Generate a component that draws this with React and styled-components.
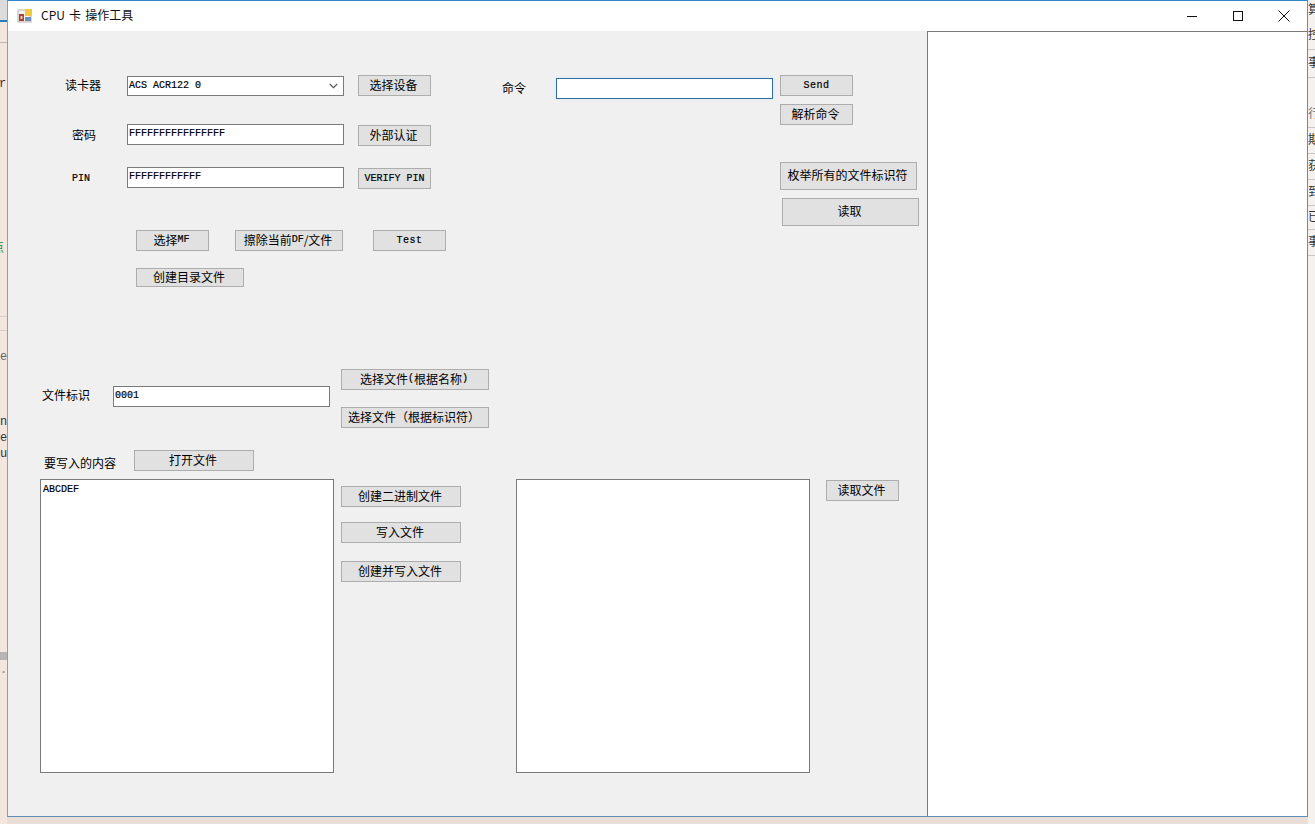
import React from 'react'
import styled, { createGlobalStyle } from 'styled-components'

const GlobalStyle = createGlobalStyle`
  * { box-sizing: border-box; }
  html, body { margin: 0; padding: 0; background: #e9dfd8; overflow: hidden; }
`

const uiFont = `"Noto Sans CJK SC", "Liberation Sans", sans-serif`
const monoFont = `"Liberation Mono", "Noto Sans CJK SC", monospace`

const Desktop = styled.div`
  width: 1315px;
  height: 824px;
  display: flex;
  align-items: flex-start;
  overflow: hidden;
  background: #e9dfd8;
`
const Strip = styled.div`
  width: ${(p) => p.$width}px;
  height: 824px;
  flex: none;
  overflow: hidden;
  background: ${(p) => p.$bg};
`
const StripRow = styled.div`
  height: ${(p) => p.$h}px;
  line-height: ${(p) => p.$h}px;
  font-family: ${monoFont};
  font-size: 12px;
  color: ${(p) => p.$color || '#333'};
  white-space: nowrap;
  background: ${(p) => p.$bg || 'transparent'};
  border-bottom: ${(p) => (p.$line ? `1px solid ${p.$line}` : 'none')};
`
const LeftLetter = styled.span`
  display: block;
  margin-left: ${(p) => p.$shift}px;
`

const Window = styled.div`
  width: 1301px;
  height: 817px;
  flex: none;
  display: flex;
  flex-direction: column;
  background: #fff;
  border: 1px solid #5f8fb8;
  border-left-color: #6fa5d8;
  border-top-color: #2f86c8;
`
const TitleBar = styled.div`
  height: 30px;
  flex: none;
  display: flex;
  align-items: center;
  padding-left: 9px;
  background: #fff;
`
const Title = styled.div`
  margin-left: 8px;
  padding-bottom: 3px;
  font-family: ${uiFont};
  font-size: 12px;
  word-spacing: 1.5px;
  color: #111;
  flex: 1;
`
const WinButton = styled.div`
  width: 46px;
  height: 30px;
  display: flex;
  align-items: center;
  justify-content: center;
`
const Content = styled.div`
  flex: 1;
  display: flex;
  min-height: 0;
`
const Form = styled.div`
  width: 919px;
  flex: none;
  padding-top: 44px;
  background: #f0f0f0;
  font-family: ${uiFont};
  font-size: 12px;
  color: #000;
`
const LogPanel = styled.div`
  width: 380px;
  flex: none;
  background: #fff;
  border-top: 1px solid #7a7a7a;
  border-left: 1px solid #7a7a7a;
`
const TopSection = styled.div`
  display: flex;
  align-items: flex-start;
`
const CredentialsColumn = styled.div`
  width: 438px;
  flex: none;
`
const FieldRow = styled.div`
  display: grid;
  grid-template-columns: 105px 217px 73px;
  column-gap: 14px;
  align-items: start;
  margin-top: ${(p) => p.$top || 0}px;
`
const FieldLabel = styled.div`
  padding-left: ${(p) => p.$indent}px;
  padding-top: ${(p) => p.$down}px;
  line-height: 18px;
`
const ActionRow = styled.div`
  display: flex;
  padding-left: 128px;
  margin-top: ${(p) => p.$top}px;
`
const CommandColumn = styled.div`
  margin-left: 56px;
  margin-top: 3px;
  display: flex;
  align-items: center;
`
const CommandLabel = styled.div`
  width: 54px;
  padding-bottom: 2px;
`
const SideColumn = styled.div`
  margin-left: 7px;
  display: flex;
  flex-direction: column;
  align-items: flex-start;
`
const FileSection = styled.div`
  display: flex;
  align-items: flex-start;
  margin-top: 82px;
  padding-left: 34px;
`
const FileLabel = styled.div`
  width: 71px;
  margin-top: 17px;
  line-height: 18px;
`
const FileInputWrap = styled.div`
  margin-top: 17px;
`
const ButtonStack = styled.div`
  display: flex;
  flex-direction: column;
  margin-left: ${(p) => p.$left}px;
  margin-top: ${(p) => p.$top || 0}px;
`
const WriteHeader = styled.div`
  display: flex;
  align-items: flex-start;
  margin-top: 22px;
  padding-left: 36px;
`
const WriteLabel = styled.div`
  width: 90px;
  margin-top: 4px;
  line-height: 17px;
`
const EditorRow = styled.div`
  display: flex;
  align-items: flex-start;
  margin-top: 8px;
  padding-left: 32px;
`
const Button = styled.div`
  width: ${(p) => p.$w}px;
  height: ${(p) => p.$h || 21}px;
  flex: none;
  margin-top: ${(p) => p.$top || 0}px;
  margin-left: ${(p) => p.$left || 0}px;
  padding-bottom: ${(p) => (p.$latin ? 0 : 2)}px;
  padding-right: ${(p) => (p.$latin ? 0 : 2)}px;
  display: flex;
  align-items: center;
  justify-content: center;
  white-space: nowrap;
  background: #e1e1e1;
  border: 1px solid #adadad;
  font-size: 12px;
  line-height: 1;
`
const Latin = styled.span`
  font-family: ${monoFont};
  font-size: 10px;
  line-height: 1;
  letter-spacing: ${(p) => p.$spacing || 0}px;
  -webkit-text-stroke: 0.2px #000;
`
const TextBox = styled.input`
  display: block;
  width: 217px;
  height: 21px;
  margin: 0;
  margin-top: ${(p) => p.$top || 0}px;
  padding: 0 1px 3px;
  background: #fff;
  border: 1px solid ${(p) => (p.$focused ? '#2f6ea8' : '#7a7a7a')};
  box-shadow: ${(p) => (p.$focused ? '0 0 3px #cfe6fa' : 'none')};
  border-radius: 0;
  outline: none;
  font-family: ${monoFont};
  font-size: 10px;
  color: #000;
  -webkit-text-stroke: 0.2px #000;
`
const Combo = styled.div`
  width: 217px;
  height: 20px;
  margin-top: 1px;
  display: flex;
  align-items: center;
  justify-content: space-between;
  padding: 0 5px 0 1px;
  background: #fff;
  border: 1px solid #7a7a7a;
`
const Editor = styled.textarea`
  display: block;
  width: 294px;
  height: 294px;
  flex: none;
  margin: 0;
  padding: 4px 2px;
  resize: none;
  overflow: hidden;
  background: #fff;
  border: 1px solid #7a7a7a;
  border-radius: 0;
  outline: none;
  font-family: ${monoFont};
  font-size: 10px;
  line-height: 12px;
  color: #000;
  -webkit-text-stroke: 0.2px #000;
`

const AppIcon = () => (
  <svg width="16" height="16" viewBox="0 0 16 16">
    <rect x="1" y="2" width="13" height="12" fill="#f4f2ee" stroke="#b9b5b0" />
    <rect x="2" y="6" width="5" height="7" fill="#a5433b" />
    <rect x="3.5" y="8" width="2" height="3" fill="#e9c9a8" />
    <rect x="8" y="1" width="7" height="7" fill="#f5c93f" />
    <rect x="8" y="9" width="6" height="4" fill="#6c8fc0" />
  </svg>
)

const MinIcon = () => (
  <svg width="12" height="12" viewBox="0 0 12 12">
    <path d="M1 6.5h10" stroke="#111" strokeWidth="1" />
  </svg>
)
const MaxIcon = () => (
  <svg width="12" height="12" viewBox="0 0 12 12">
    <rect x="1.5" y="1.5" width="9" height="9" fill="none" stroke="#111" />
  </svg>
)
const CloseIcon = () => (
  <svg width="12" height="12" viewBox="0 0 12 12">
    <path d="M.5.5l11 11M11.5.5l-11 11" stroke="#111" strokeWidth="1" />
  </svg>
)
const Chevron = () => (
  <svg width="9" height="6" viewBox="0 0 9 6">
    <path d="M.8 1l3.7 3.7L8.2 1" fill="none" stroke="#555" strokeWidth="1.1" />
  </svg>
)

const leftStrip = [
  { h: 20, bg: '#dcdcdc' },
  { h: 2, bg: '#2b7cc0' },
  { h: 20 },
  { h: 1, bg: '#bdb8b4' },
  { h: 34 },
  { h: 14, text: 'r', shift: -1 },
  { h: 152 },
  { h: 12, text: '点', shift: -8, color: '#1f8a3a' },
  { h: 61 },
  { h: 1, bg: '#d5d0cc' },
  { h: 13 },
  { h: 1, bg: '#d5d0cc' },
  { h: 19 },
  { h: 14, text: 'e', shift: 0, color: '#666' },
  { h: 50 },
  { h: 16, text: 'n', shift: 0 },
  { h: 16, text: 'e', shift: 0 },
  { h: 16, text: 'u', shift: 0 },
  { h: 190 },
  { h: 8, bg: '#b8b4b2' },
  { h: 10 },
  { h: 6, text: '··', shift: 0, color: '#888' },
]

const rightStrip = [
  { h: 22, text: '算' },
  { h: 28, text: '控', line: '#c8c8c8' },
  { h: 28, text: '事', line: '#c8c8c8' },
  { h: 24 },
  { h: 26, text: '行', line: '#c8c8c8', color: '#777' },
  { h: 26, text: '期', line: '#c8c8c8' },
  { h: 26, text: '获', line: '#c8c8c8' },
  { h: 26, text: '到', line: '#c8c8c8' },
  { h: 24, text: '已', line: '#c8c8c8' },
  { h: 26, text: '事', line: '#c8c8c8' },
]

const App = () => (
  <Desktop>
    <GlobalStyle />
    <Strip $width={7} $bg="#f2e6df">
      {leftStrip.map((row, i) => (
        <StripRow key={i} $h={row.h} $bg={row.bg} $color={row.color}>
          {row.text && <LeftLetter $shift={row.shift}>{row.text}</LeftLetter>}
        </StripRow>
      ))}
    </Strip>
    <Window>
      <TitleBar>
        <AppIcon />
        <Title>CPU 卡 操作工具</Title>
        <WinButton><MinIcon /></WinButton>
        <WinButton><MaxIcon /></WinButton>
        <WinButton><CloseIcon /></WinButton>
      </TitleBar>
      <Content>
        <Form>
          <TopSection>
            <CredentialsColumn>
              <FieldRow>
                <FieldLabel $indent={57} $down={1}>读卡器</FieldLabel>
                <Combo>
                  <Latin>ACS ACR122 0</Latin>
                  <Chevron />
                </Combo>
                <Button $w={73}>选择设备</Button>
              </FieldRow>
              <FieldRow $top={28}>
                <FieldLabel $indent={64} $down={2}>密码</FieldLabel>
                <TextBox readOnly value="FFFFFFFFFFFFFFFF" />
                <Button $w={73} $top={1}>外部认证</Button>
              </FieldRow>
              <FieldRow $top={21}>
                <FieldLabel $indent={64} $down={0}><Latin>PIN</Latin></FieldLabel>
                <TextBox readOnly value="FFFFFFFFFFFF" />
                <Button $w={73} $top={1} $latin><Latin>VERIFY PIN</Latin></Button>
              </FieldRow>
              <ActionRow $top={41}>
                <Button $w={73}>选择<Latin>MF</Latin></Button>
                <Button $w={108} $left={26}>擦除当前<Latin>DF</Latin>/文件</Button>
                <Button $w={73} $left={30} $latin><Latin $spacing={0.5}>Test</Latin></Button>
              </ActionRow>
              <ActionRow $top={17}>
                <Button $w={108} $h={19}>创建目录文件</Button>
              </ActionRow>
            </CredentialsColumn>
            <CommandColumn>
              <CommandLabel>命令</CommandLabel>
              <TextBox $focused readOnly value="" />
            </CommandColumn>
            <SideColumn>
              <Button $w={73} $latin><Latin $spacing={0.5}>Send</Latin></Button>
              <Button $w={73} $top={8}>解析命令</Button>
              <Button $w={137} $h={28} $top={37}>枚举所有的文件标识符</Button>
              <Button $w={137} $h={28} $top={8} $left={2}>读取</Button>
            </SideColumn>
          </TopSection>

          <FileSection>
            <FileLabel>文件标识</FileLabel>
            <FileInputWrap>
              <TextBox readOnly value="0001" />
            </FileInputWrap>
            <ButtonStack $left={11}>
              <Button $w={148}>选择文件<Latin>(</Latin>根据名称<Latin>)</Latin></Button>
              <Button $w={148} $top={17}>选择文件（根据标识符）</Button>
            </ButtonStack>
          </FileSection>

          <WriteHeader>
            <WriteLabel>要写入的内容</WriteLabel>
            <Button $w={120}>打开文件</Button>
          </WriteHeader>

          <EditorRow>
            <Editor readOnly value="ABCDEF" />
            <ButtonStack $left={7} $top={7}>
              <Button $w={120}>创建二进制文件</Button>
              <Button $w={120} $top={15}>写入文件</Button>
              <Button $w={120} $top={18}>创建并写入文件</Button>
            </ButtonStack>
            <ButtonStack $left={55}>
              <Editor readOnly value="" />
            </ButtonStack>
            <Button $w={73} $left={16} $top={1}>读取文件</Button>
          </EditorRow>
        </Form>
        <LogPanel />
      </Content>
    </Window>
    <Strip $width={7} $bg="#f4f1ee">
      {rightStrip.map((row, i) => (
        <StripRow key={i} $h={row.h} $line={row.line} $color={row.color}>
          {row.text}
        </StripRow>
      ))}
    </Strip>
  </Desktop>
)

export default App
